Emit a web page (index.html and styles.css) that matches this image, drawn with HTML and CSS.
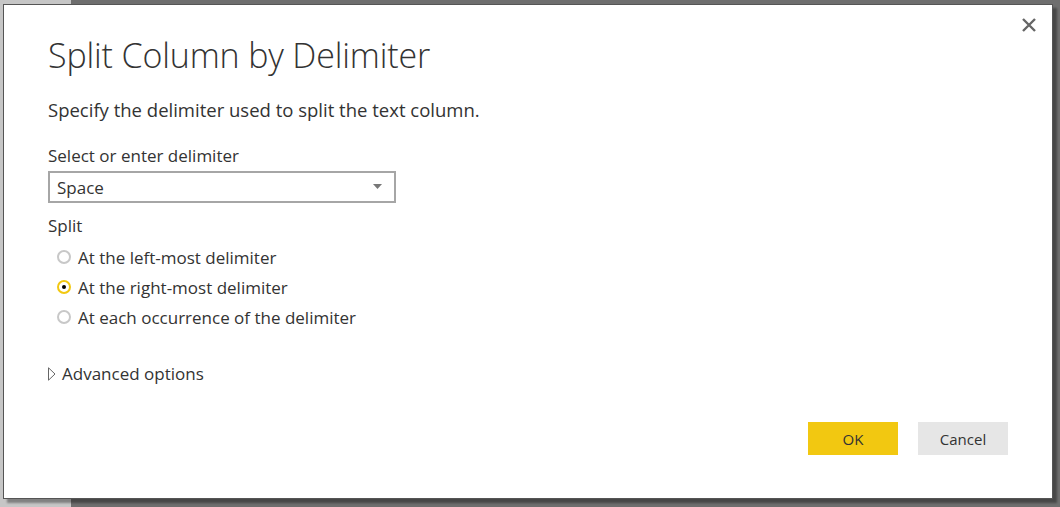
FILE: index.html
```html
<!DOCTYPE html>
<html lang="en">
<head>
<meta charset="utf-8">
<title>Split Column by Delimiter</title>
<link rel="stylesheet" href="styles.css">
</head>
<body>
<div class="backdrop">
  <div class="dialog">
    <button class="close" aria-label="Close">
      <svg width="16" height="16" viewBox="0 0 16 16"><path d="M2 2 L14 14 M14 2 L2 14" stroke="#666" stroke-width="2.4" fill="none"/></svg>
    </button>
    <h1 class="title">Split Column by Delimiter</h1>
    <p class="desc">Specify the delimiter used to split the text column.</p>
    <div class="field first">
      <label class="label">Select or enter delimiter</label>
      <div class="select">
        <span class="select-value">Space</span>
        <svg class="caret" width="9" height="5" viewBox="0 0 9 5"><path d="M0 0 H9 L4.5 5 Z" fill="#777"/></svg>
      </div>
    </div>
    <div class="field second">
      <div class="label">Split</div>
      <div class="radios">
        <div class="radio"><span class="dot"></span>At the left-most delimiter</div>
        <div class="radio checked"><span class="dot"></span>At the right-most delimiter</div>
        <div class="radio"><span class="dot"></span>At each occurrence of the delimiter</div>
      </div>
    </div>
    <div class="advanced">
      <svg width="8" height="14" viewBox="0 0 8 14"><path d="M0.5 0.8 L7 7 L0.5 13.2 Z" fill="none" stroke="#666" stroke-width="1"/></svg>
      <span>Advanced options</span>
    </div>
    <div class="footer">
      <button class="btn primary">OK</button>
      <button class="btn">Cancel</button>
    </div>
  </div>
</div>
</body>
</html>
```
FILE: styles.css
```css
html, body {
  margin: 0;
  padding: 0;
  height: 100%;
}
body {
  background: linear-gradient(to right, #c6c6c6 0, #c6c6c6 71px, #6e6e6e 71px, #6e6e6e 100%);
  font-family: "Open Sans", "Noto Sans", sans-serif;
  color: #333;
  overflow: hidden;
}
.backdrop {
  padding: 4px 0 0 3px;
}
.dialog {
  position: relative;
  width: 1050px;
  height: 495px;
  box-sizing: border-box;
  border: 1px solid #555;
  background: #fff;
  padding: 26px 0 0 44px;
  box-shadow: 4px 4px 2px rgba(0, 0, 0, 0.35);
  display: flex;
  flex-direction: column;
}
.close {
  position: absolute;
  top: 12px;
  right: 15px;
  background: none;
  border: 0;
  padding: 0;
  width: 16px;
  height: 16px;
  cursor: pointer;
}
.title {
  margin: 0;
  font-weight: 300;
  font-size: 34px;
  line-height: 48px;
  color: #333;
  letter-spacing: -0.15px;
}
.desc {
  margin: 19px 0 0;
  font-size: 18.5px;
  line-height: 24px;
  color: #333;
}
.field {
  display: flex;
  flex-direction: column;
}
.field.first {
  margin-top: 23px;
}
.field.second {
  margin-top: 12px;
}
.label {
  font-size: 17px;
  line-height: 22px;
  color: #333;
}
.select {
  margin-top: 4px;
  width: 348px;
  height: 32px;
  box-sizing: border-box;
  border: 2px solid #a6a6a6;
  display: flex;
  align-items: center;
  justify-content: space-between;
  padding: 0 12px 0 7px;
}
.select-value {
  font-size: 17px;
  color: #333;
}
.caret {
  margin-top: -1px;
}
.radios {
  display: flex;
  flex-direction: column;
  margin-top: 5px;
}
.radio {
  display: flex;
  align-items: center;
  height: 30px;
  font-size: 17px;
  color: #333;
  padding-left: 9px;
}
.dot {
  width: 14px;
  height: 14px;
  box-sizing: border-box;
  border: 2.5px solid #c8c8c8;
  border-radius: 50%;
  margin-right: 7px;
  display: flex;
  align-items: center;
  justify-content: center;
}
.radio.checked .dot {
  border-color: #f2c811;
}
.radio.checked .dot::after {
  content: "";
  width: 4px;
  height: 4px;
  border-radius: 50%;
  background: #000;
}
.advanced {
  margin-top: 30px;
  display: flex;
  align-items: center;
  gap: 6px;
  font-size: 17px;
  line-height: 23px;
  color: #333;
}
.footer {
  margin-top: auto;
  margin-bottom: 43px;
  display: flex;
  justify-content: flex-end;
  gap: 20px;
  padding-right: 44px;
}
.btn {
  width: 90px;
  height: 33px;
  border: 0;
  background: #e6e6e6;
  font-family: "Open Sans", "Noto Sans", sans-serif;
  font-size: 15px;
  color: #333;
  padding: 0;
}
.btn.primary {
  background: #f2c811;
}
```
